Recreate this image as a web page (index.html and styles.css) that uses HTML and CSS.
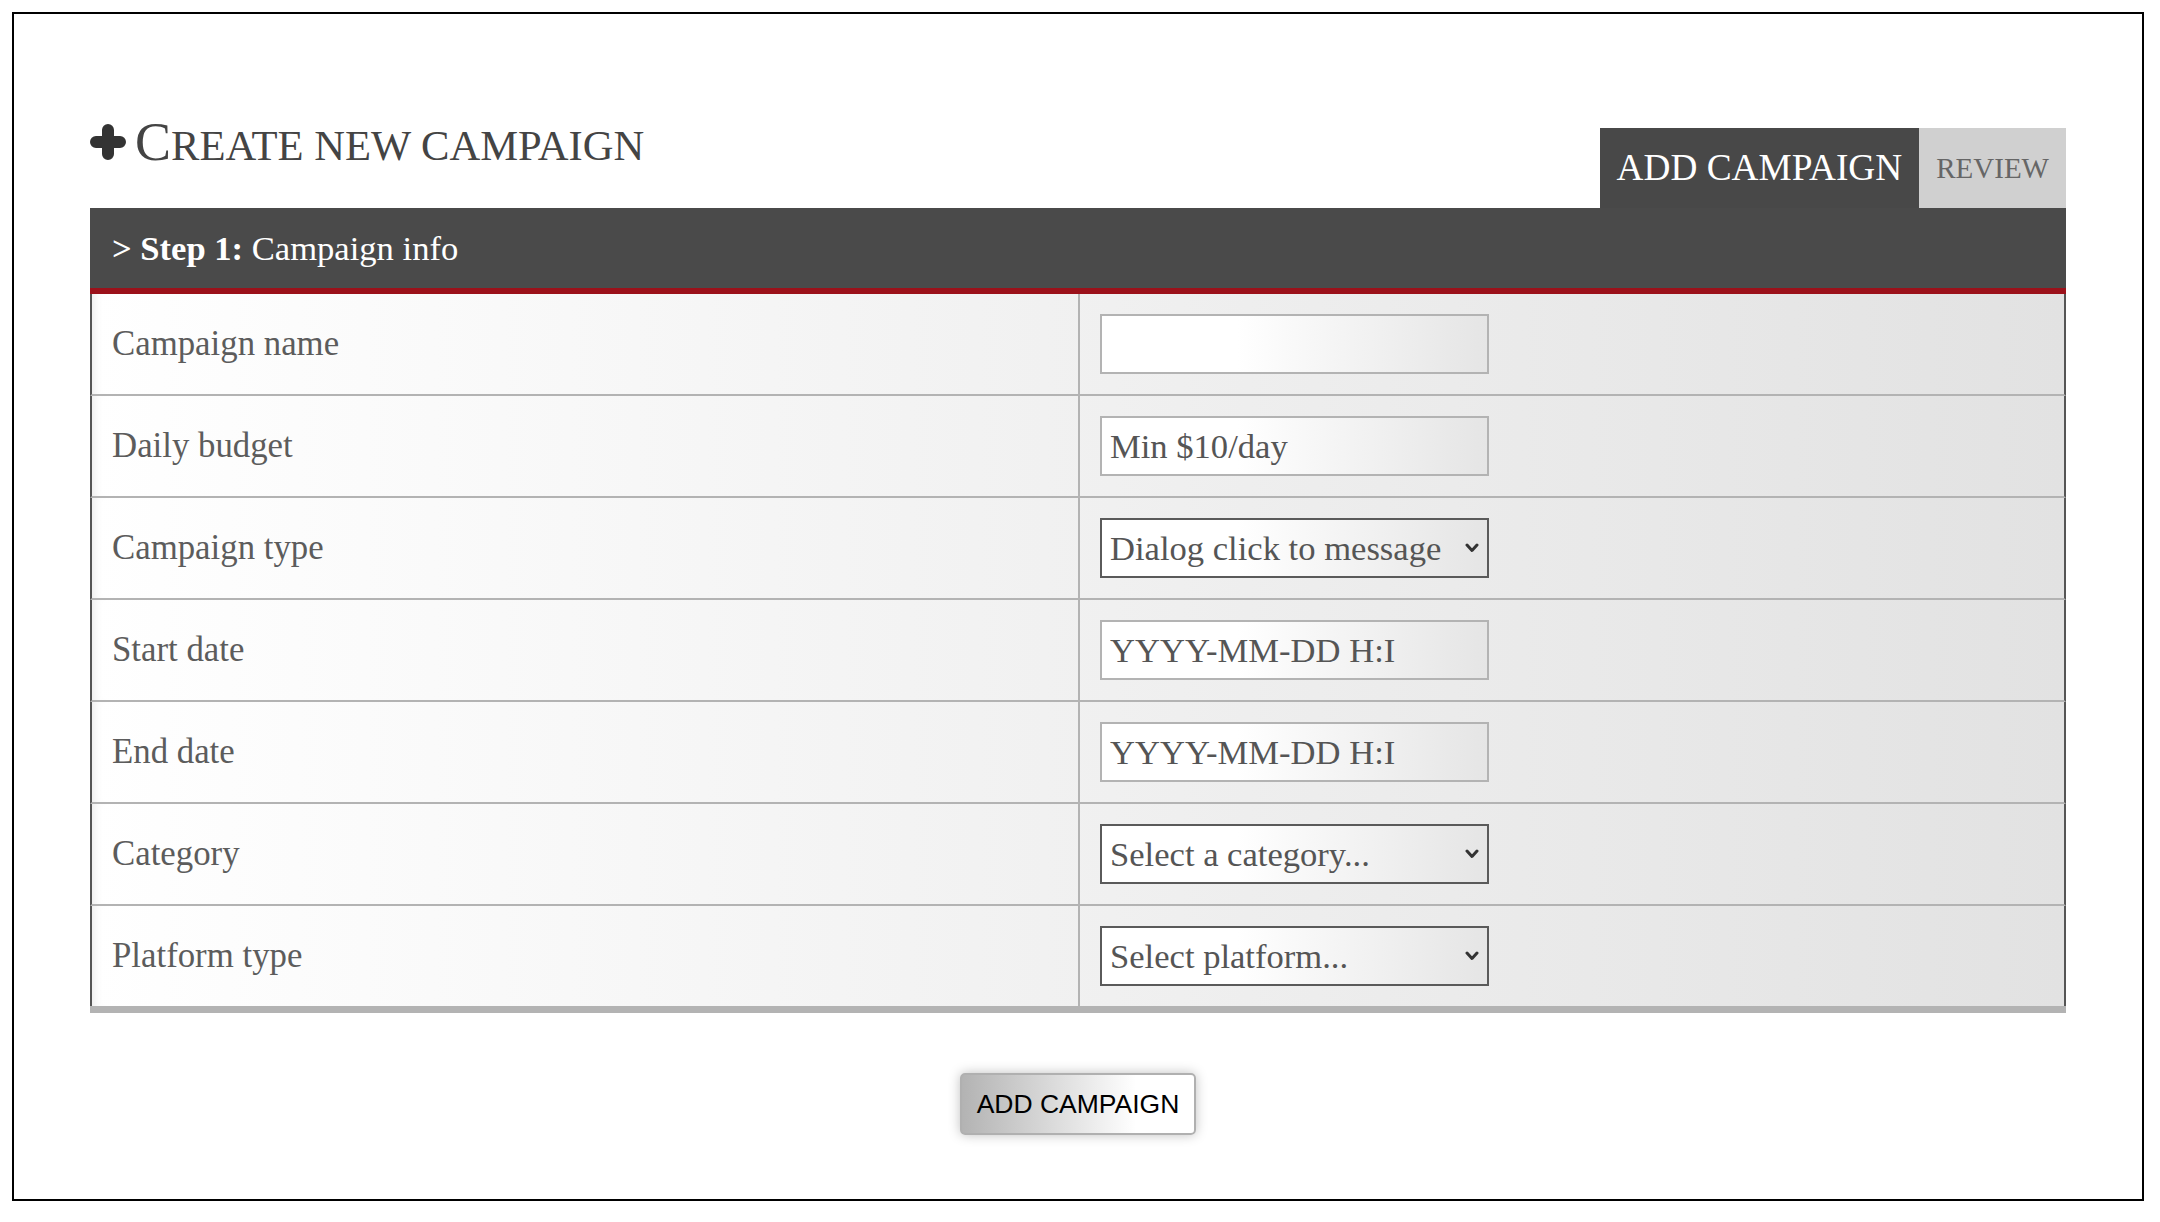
FILE: index.html
```html
<!DOCTYPE html>
<html>
<head>
<meta charset="utf-8">
<title>Create new campaign</title>
<link rel="stylesheet" href="styles.css">
</head>
<body>
<div class="page">
  <div class="top-bar">
    <h1 class="title"><svg class="plus-icon" width="36" height="36" viewBox="0 0 36 36"><path d="M18 6V30M6 18H30" stroke="#333" stroke-width="12" stroke-linecap="round" fill="none"/></svg><span class="title-text">Create new campaign</span></h1>
    <div class="tabs">
      <div class="tab tab-active">ADD CAMPAIGN</div>
      <div class="tab tab-inactive">REVIEW</div>
    </div>
  </div>
  <div class="form-table">
    <div class="step-header"><b>&gt; Step 1:</b> Campaign info</div>
    <div class="row">
      <div class="cell label">Campaign name</div>
      <div class="cell field"><input class="text-input" type="text"></div>
    </div>
    <div class="row">
      <div class="cell label">Daily budget</div>
      <div class="cell field"><input class="text-input" type="text" placeholder="Min $10/day"></div>
    </div>
    <div class="row">
      <div class="cell label">Campaign type</div>
      <div class="cell field"><div class="select-wrap"><select class="select-input"><option>Dialog click to message</option></select><svg class="chevron" width="14" height="10" viewBox="0 0 14 10"><polyline points="2,2 7,7.5 12,2" fill="none" stroke="#333" stroke-width="3" stroke-linecap="round" stroke-linejoin="round"/></svg></div></div>
    </div>
    <div class="row">
      <div class="cell label">Start date</div>
      <div class="cell field"><input class="text-input" type="text" placeholder="YYYY-MM-DD H:I"></div>
    </div>
    <div class="row">
      <div class="cell label">End date</div>
      <div class="cell field"><input class="text-input" type="text" placeholder="YYYY-MM-DD H:I"></div>
    </div>
    <div class="row">
      <div class="cell label">Category</div>
      <div class="cell field"><div class="select-wrap"><select class="select-input"><option>Select a category...</option></select><svg class="chevron" width="14" height="10" viewBox="0 0 14 10"><polyline points="2,2 7,7.5 12,2" fill="none" stroke="#333" stroke-width="3" stroke-linecap="round" stroke-linejoin="round"/></svg></div></div>
    </div>
    <div class="row row-last">
      <div class="cell label">Platform type</div>
      <div class="cell field"><div class="select-wrap"><select class="select-input"><option>Select platform...</option></select><svg class="chevron" width="14" height="10" viewBox="0 0 14 10"><polyline points="2,2 7,7.5 12,2" fill="none" stroke="#333" stroke-width="3" stroke-linecap="round" stroke-linejoin="round"/></svg></div></div>
    </div>
  </div>
  <div class="actions">
    <button class="submit" type="button">ADD CAMPAIGN</button>
  </div>
</div>
</body>
</html>
```

FILE: styles.css
```css
html, body {
  margin: 0;
  padding: 0;
  background: #fff;
}

body {
  font-family: "Liberation Serif", "Times New Roman", serif;
}

.page {
  margin: 12px;
  width: 2132px;
  height: 1189px;
  box-sizing: border-box;
  border: 2px solid #000;
  padding: 101px 76px 0;
}

.top-bar {
  display: flex;
  justify-content: space-between;
  align-items: flex-end;
}

.title {
  margin: 0 0 39px;
  font-weight: normal;
  font-size: 42.6px;
  line-height: 1;
  color: #444;
  text-transform: uppercase;
  white-space: nowrap;
}

.plus-icon {
  display: inline-block;
  vertical-align: baseline;
  margin-right: 9px;
}

.title-text {
  display: inline-block;
}

.title-text::first-letter {
  font-size: 54px;
}

.tabs {
  display: flex;
}

.tab {
  height: 80px;
  line-height: 80px;
  padding: 0 17px;
  white-space: nowrap;
}

.tab-active {
  background: #484848;
  color: #fff;
  font-size: 37.3px;
}

.tab-inactive {
  background: #d0d0d0;
  color: #666;
  font-size: 29px;
}

.form-table {
  border-bottom: 7px solid #b3b3b3;
}

.step-header {
  height: 80px;
  line-height: 80px;
  background: #4a4a4a;
  border-bottom: 6px solid #9b111a;
  color: #fff;
  font-size: 34.6px;
  padding-left: 22px;
}

.step-header b {
  font-weight: bold;
}

.row {
  display: grid;
  grid-template-columns: 988px 1fr;
  height: 100px;
  border-left: 2px solid #555;
  border-right: 2px solid #555;
  border-bottom: 2px solid #b3b3b3;
  background: linear-gradient(to right, #ffffff, #e2e2e2);
}

.row-last {
  border-bottom: 0;
}

.cell {
  display: flex;
  align-items: center;
}

.label {
  border-right: 2px solid #b3b3b3;
  padding-left: 20px;
  font-size: 34.8px;
  color: #5c5c5c;
  box-shadow: inset 10px 0 12px -10px rgba(0, 0, 0, 0.12);
}

.field {
  padding-left: 20px;
}

.text-input,
.select-input {
  width: 389px;
  height: 60px;
  box-sizing: border-box;
  margin: 0;
  padding: 0 8px;
  font-family: "Liberation Serif", "Times New Roman", serif;
  font-size: 34.6px;
  color: #555;
  border-radius: 0;
  outline: none;
  background: linear-gradient(to right, #ffffff 35%, #e5e5e5);
}

.text-input {
  border: 2px solid #b3b3b3;
}

.text-input::placeholder {
  color: #555;
  opacity: 1;
}

.select-wrap {
  position: relative;
  display: inline-block;
}

.select-input {
  -webkit-appearance: none;
  appearance: none;
  border: 2px solid #5a5a5a;
  display: block;
}

.chevron {
  position: absolute;
  right: 10px;
  top: 25px;
  pointer-events: none;
}

.actions {
  display: flex;
  justify-content: center;
  margin-top: 60px;
}

.submit {
  height: 62px;
  padding: 0 15px;
  font-family: "Liberation Sans", Arial, sans-serif;
  font-size: 26.5px;
  color: #000;
  border: 2px solid #b0b0b0;
  border-radius: 5px;
  background: linear-gradient(to right, #b3b3b3, #ffffff 75%);
  box-shadow: 0 0 12px rgba(0, 0, 0, 0.25);
}
```
